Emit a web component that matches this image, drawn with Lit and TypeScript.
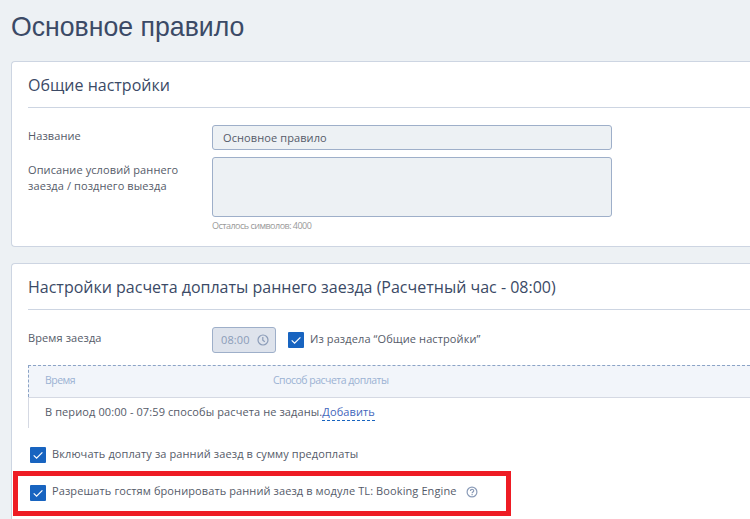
import { LitElement, css, html, svg } from "lit";
import { customElement, property } from "lit/decorators.js";

const clockIcon = svg`
  <circle cx="6" cy="6" r="5" />
  <path d="M5.8 3v3.2l2 1.6" />
`;

const helpIcon = svg`
  <circle cx="6" cy="6" r="4.9" />
  <path d="M4.4 4.9c0-2.1 3.3-2.1 3.3-.2 0 1.3-1.6 1.2-1.6 2.6M6.1 8.1v1.2" />
`;

@customElement("check-box")
class CheckBox extends LitElement {
  static styles = css`
    :host {
      display: flex;
      align-items: flex-start;
      gap: 6px;
    }
    .box {
      flex: none;
      width: 16px;
      height: 16px;
      border-radius: 1px;
      background: #1864c0;
    }
    .mark {
      display: block;
      fill: none;
      stroke: #fff;
      stroke-width: 1.2;
    }
    .label {
      line-height: 16px;
      margin-top: var(--label-shift, -1px);
      white-space: nowrap;
    }
  `;

  render() {
    return html`
      <span class="box">
        <svg class="mark" width="16" height="16" viewBox="0 0 16 16">
          <path d="M3.7 8.3l2.9 2.9 5.8-5.9" />
        </svg>
      </span>
      <span class="label"><slot></slot></span>
    `;
  }
}

@customElement("settings-card")
class SettingsCard extends LitElement {
  static styles = css`
    :host {
      display: block;
      box-sizing: border-box;
      padding: 0 0 0 16px;
      border: 1px solid #cdd5e2;
      border-right: 0;
      border-radius: 4px 0 0 4px;
      background: #fff;
    }
    .heading {
      height: 45px;
      margin: 0;
      border-bottom: 1px solid #cdd5e2;
      color: #3b4a66;
      font-size: 16px;
      font-weight: 400;
      letter-spacing: 0;
      line-height: 47px;
      white-space: nowrap;
    }
  `;

  @property() heading = "";

  render() {
    return html`
      <h2 class="heading">${this.heading}</h2>
      <slot></slot>
    `;
  }
}

@customElement("app-root")
class AppRoot extends LitElement {
  static styles = css`
    :host {
      display: block;
      box-sizing: border-box;
      height: 519px;
      padding-left: 11px;
      overflow: hidden;
      background: #edf1f4;
      color: #555b69;
      font: 11px/16px "Open Sans", "Noto Sans", sans-serif;
      letter-spacing: 0.1px;
    }
    .title {
      height: 61px;
      margin: 0;
      color: #3b4a66;
      font: 400 28px/53px "Liberation Sans", Arial, sans-serif;
      letter-spacing: 0;
      transform: scaleX(0.952);
      transform-origin: 0 0;
      white-space: nowrap;
    }
    .general {
      height: 186px;
      margin-bottom: 16px;
    }
    .surcharge {
      height: 300px;
    }
    .row {
      display: grid;
      grid-template-columns: 184px 400px;
    }
    .name {
      margin-top: 17px;
    }
    .description {
      margin-top: 7px;
    }
    .label {
      padding-top: 3px;
    }
    .description .label {
      padding-top: 5px;
    }
    .field {
      box-sizing: border-box;
      height: 25px;
      padding: 0 10px;
      border: 1px solid #9eafc9;
      border-radius: 3px;
      background: #edf1f4;
      line-height: 24px;
    }
    .area {
      height: 60px;
    }
    .hint {
      color: #999;
      font-size: 9px;
      letter-spacing: -0.52px;
      line-height: 18px;
    }
    .arrival {
      display: grid;
      grid-template-columns: 184px 64px auto;
      margin-top: 17px;
    }
    .time {
      display: flex;
      align-items: center;
      justify-content: space-between;
      box-sizing: border-box;
      height: 26px;
      padding: 0 6px 0 8px;
      border: 1px solid #9eafc9;
      border-radius: 3px;
      background: #dee3ec;
      color: #8b9cb8;
    }
    .icon {
      display: block;
      fill: none;
      stroke: #8b9cb8;
      stroke-width: 1.2;
    }
    .from-general {
      margin: 5px 0 0 12px;
    }
    .table {
      margin-top: 12px;
    }
    .head {
      display: grid;
      grid-template-columns: 228px auto;
      box-sizing: border-box;
      height: 32px;
      padding-left: 16px;
      border: 1px dashed #8ba3c6;
      border-width: 1px 0 0 1px;
      background: #f2f5fa;
      color: #9bb2d3;
      font-size: 10.5px;
      letter-spacing: -0.5px;
      line-height: 29px;
    }
    .line {
      height: 30px;
      padding-left: 16px;
      border: 1px solid #d5d9e3;
      border-width: 1px 0 0 1px;
      line-height: 28px;
    }
    .add {
      display: inline-block;
      padding-bottom: 1px;
      border-bottom: 1px dashed #1864c0;
      color: #3f66bb;
      line-height: 15px;
    }
    .prepay {
      margin: 19px 0 0 2px;
    }
    .marked {
      --label-shift: -2px;
      display: flex;
      box-sizing: border-box;
      width: 498px;
      height: 45px;
      margin: 8px 0 0 -15px;
      padding: 9px 0 0 12px;
      border: 5px solid #ee1c24;
    }
    .help {
      margin: 1px 0 0 9px;
    }
  `;

  render() {
    return html`
      <h1 class="title">Основное правило</h1>

      <settings-card class="general" heading="Общие настройки">
        <div class="row name">
          <span class="label">Название</span>
          <div class="field">Основное правило</div>
        </div>
        <div class="row description">
          <span class="label">Описание условий раннего<br />заезда / позднего выезда</span>
          <div>
            <div class="field area"></div>
            <div class="hint">Осталось символов: 4000</div>
          </div>
        </div>
      </settings-card>

      <settings-card
        class="surcharge"
        heading="Настройки расчета доплаты раннего заезда (Расчетный час - 08:00)"
      >
        <div class="arrival">
          <span class="label">Время заезда</span>
          <div class="time">
            08:00
            <svg class="icon" width="12" height="12" viewBox="0 0 12 12">${clockIcon}</svg>
          </div>
          <check-box class="from-general">Из раздела “Общие настройки”</check-box>
        </div>
        <div class="table">
          <div class="head">
            <span>Время</span>
            <span>Способ расчета доплаты</span>
          </div>
          <div class="line">
            В период 00:00 - 07:59 способы расчета не заданы.<span class="add">Добавить</span>
          </div>
        </div>
        <check-box class="prepay">Включать доплату за ранний заезд в сумму предоплаты</check-box>
        <div class="marked">
          <check-box>Разрешать гостям бронировать ранний заезд в модуле TL: Booking Engine</check-box>
          <svg class="icon help" width="12" height="12" viewBox="0 0 12 12">${helpIcon}</svg>
        </div>
      </settings-card>
    `;
  }
}
